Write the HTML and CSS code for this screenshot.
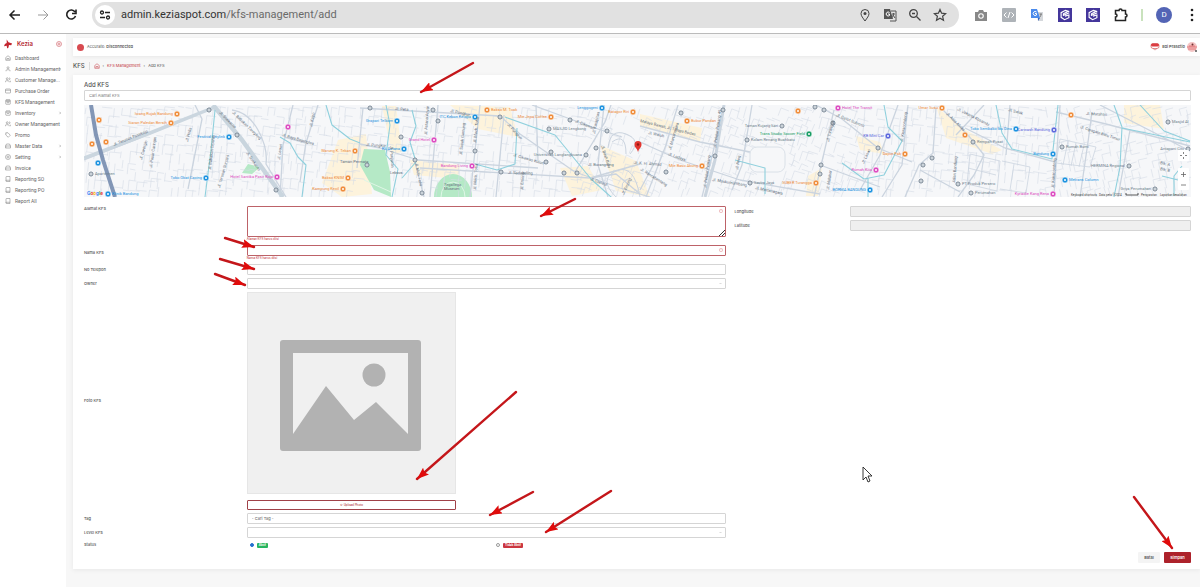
FILE: index.html
```html
<!DOCTYPE html>
<html lang="id">
<head>
<meta charset="utf-8">
<title>Add KFS</title>
<link rel="stylesheet" href="styles.css">
</head>
<body>
<svg class="sprite" aria-hidden="true">
  <symbol id="i-home" viewBox="0 0 24 24"><path d="M3 10 12 3l9 7v11H3zM8 21v-7h8v7"/></symbol>
  <symbol id="i-user" viewBox="0 0 24 24"><circle cx="12" cy="7" r="4"/><path d="M4 21v-2a4 4 0 0 1 4-4h8a4 4 0 0 1 4 4v2"/></symbol>
  <symbol id="i-users" viewBox="0 0 24 24"><circle cx="9" cy="7" r="4"/><path d="M1 21v-2a4 4 0 0 1 4-4h8a4 4 0 0 1 4 4v2M16 3a4 4 0 0 1 0 8M23 21v-2a4 4 0 0 0-3-4"/></symbol>
  <symbol id="i-card" viewBox="0 0 24 24"><rect x="2" y="4" width="20" height="16" rx="2"/><path d="M2 9h20"/></symbol>
  <symbol id="i-store" viewBox="0 0 24 24"><rect x="3" y="3" width="18" height="18" rx="2"/><path d="M3 9h18M9 9v6h6V9M4 5h16"/></symbol>
  <symbol id="i-box" viewBox="0 0 24 24"><rect x="3" y="4" width="18" height="17" rx="2"/><path d="M3 9h18M8 2v4M16 2v4M8 14h8"/></symbol>
  <symbol id="i-tag" viewBox="0 0 24 24"><path d="M3 3h9l9 10-8 8L3 12zM7 7h1"/></symbol>
  <symbol id="i-drive" viewBox="0 0 24 24"><path d="M6 4h12l4 8v8H2v-8zM2 12h20M6 16h2"/></symbol>
  <symbol id="i-gear" viewBox="0 0 24 24"><circle cx="12" cy="12" r="10"/><circle cx="12" cy="12" r="4"/></symbol>
  <symbol id="i-book" viewBox="0 0 24 24"><path d="M4 20V4a2 2 0 0 1 2-2h14v20H6a2 2 0 0 1 0-5h14"/></symbol>
  <symbol id="i-chev" viewBox="0 0 24 24"><path d="m9 5 7 7-7 7"/></symbol>
  <symbol id="i-alert" viewBox="0 0 24 24"><circle cx="12" cy="12" r="10"/><path d="M12 7v6M12 16v1"/></symbol>
  <symbol id="i-kezia" viewBox="0 0 18 18"><rect x="0" y="0" width="18" height="18" fill="#44369b"/><path d="M14.500 4.500 9.500 3 4 6v6l4.500 3 5.500-2.500V9L9 10.500M14.500 6 7 9.500V7.500L12 5" fill="none" stroke="#fff" stroke-width="1.500"/></symbol>
</svg>

<header class="browser">
  <div class="nav">
    <button class="plain" aria-label="Back"><svg class="ic16" viewBox="0 0 16 16"><path d="M13 8H3M7.500 3.500 3 8l4.500 4.500" stroke="#222" stroke-width="1.500"/></svg></button>
    <button class="plain" aria-label="Forward"><svg class="ic16" viewBox="0 0 16 16"><path d="M3 8h10M8.500 3.500 13 8l-4.500 4.500" stroke="#999"/></svg></button>
    <button class="plain" aria-label="Reload"><svg class="ic16" viewBox="0 0 16 16"><path d="M12 5A4.500 4.500 0 1 0 12.500 9M13 2.500v4H9" stroke="#222" stroke-width="1.600"/></svg></button>
  </div>
  <div class="address">
    <button class="site" aria-label="Site information"><svg class="ic12" viewBox="0 0 12 12"><g stroke="#222" stroke-width="1.300"><circle cx="3" cy="3.500" r="1.500"/><path d="M6 3.500h5M1 8.500h5"/><circle cx="9" cy="8.500" r="1.500"/></g></svg></button>
    <span class="url">admin.keziaspot.com<span class="path">/kfs-management/add</span></span>
    <div class="tools">
      <button class="plain" aria-label="Location"><svg class="ic14" viewBox="0 0 14 14"><path d="M7 13C5 10 3 8 3 5.500a4 4 0 0 1 8 0C11 8 9 10 7 13z" stroke="#444"/><circle cx="7" cy="5.500" r="1.500" fill="#444"/></svg></button>
      <button class="plain" aria-label="Translate"><svg class="ic14" viewBox="0 0 14 14"><path d="M1 1h6l3 10H1z" fill="#555"/><path d="M8 3h5v10H7M9 6h3M10.500 5c0 3-1 4-2 5M10 7l2 3" stroke="#555"/><path d="M6.500 4.500a2 2 0 1 0 0 3V6H5" stroke="#fff"/></svg></button>
      <button class="plain" aria-label="Zoom"><svg class="ic14" viewBox="0 0 14 14"><circle cx="5.500" cy="5.500" r="3.800" stroke="#444" stroke-width="1.300"/><path d="m8.500 8.500 4 4M4 5.500h3" stroke="#444" stroke-width="1.300"/></svg></button>
      <button class="plain" aria-label="Bookmark"><svg class="ic14" viewBox="0 0 14 14"><path d="m7 1.500 1.600 3.700 4 .4-3 2.700.9 4L7 10.200l-3.500 2.100.9-4-3-2.700 4-.4z" stroke="#444" stroke-width="1.200"/></svg></button>
    </div>
  </div>
  <div class="ext">
    <svg class="ic14" viewBox="0 0 14 14"><path d="M1 4h3l1-2h4l1 2h3v9H1z" fill="#888"/><circle cx="7" cy="8" r="2.800" fill="#fff"/><circle cx="7" cy="8" r="1.700" fill="#888"/></svg>
    <svg class="ic14" viewBox="0 0 14 14"><rect width="14" height="14" rx="1" fill="#aeb3b8"/><path d="M4.500 4.500 2 7l2.500 2.500M9.500 4.500 12 7 9.500 9.500M8 4 6 10" stroke="#fff"/></svg>
    <svg class="ic14" viewBox="0 0 14 14"><path d="M6 4h7v9H8z" fill="#d5d8dc"/><path d="M1 1h6l3 9H1z" fill="#4b8bec"/><path d="M8 10h2l-2 3z" fill="#2f62c0"/><path d="M6.500 4a2 2 0 1 0 0 3V5.500H5" stroke="#fff"/><path d="M9.500 6H12M11 6c0 2-1 3-1 3" stroke="#777"/></svg>
    <svg class="ic14" viewBox="0 0 18 18"><use href="#i-kezia"/></svg>
    <svg class="ic14" viewBox="0 0 18 18"><use href="#i-kezia"/></svg>
    <svg class="ic14" viewBox="0 0 14 14"><path d="M1.500 2.500h3.500a1.500 1.500 0 0 1 3 0h3.500V6a1.500 1.500 0 0 1 0 3v3.500h-10V9a1.500 1.500 0 0 0 0-3z" stroke="#222" stroke-width="1.500"/></svg>
    <span class="bar"></span>
    <span class="avatar">D</span>
    <button class="plain" aria-label="Menu"><svg class="dots" viewBox="0 0 4 14"><g fill="#222"><circle cx="2" cy="2" r="1.300"/><circle cx="2" cy="7" r="1.300"/><circle cx="2" cy="12" r="1.300"/></g></svg></button>
  </div>
</header>

<div class="app">
  <aside class="side">
    <div class="brand">
      <svg class="logo" viewBox="0 0 10 10"><path d="M3 0 5 3 9 4.500 8 6.500 5.500 6 5 9 3.500 10 3 7 0 7.500 1 5 3 4z" fill="#c22630"/></svg>
      <strong>Kezia</strong>
      <svg class="line red" viewBox="0 0 24 24"><use href="#i-gear"/></svg>
    </div>
    <nav class="menu">
      <a href="#"><svg class="line"><use href="#i-home"/></svg><span>Dashboard</span></a>
      <a href="#"><svg class="line"><use href="#i-user"/></svg><span>Admin Management</span><svg class="chev"><use href="#i-chev"/></svg></a>
      <a href="#"><svg class="line"><use href="#i-users"/></svg><span>Customer Manage...</span></a>
      <a href="#"><svg class="line"><use href="#i-card"/></svg><span>Purchase Order</span></a>
      <a href="#"><svg class="line"><use href="#i-store"/></svg><span>KFS Management</span></a>
      <a href="#"><svg class="line"><use href="#i-box"/></svg><span>Inventory</span><svg class="chev"><use href="#i-chev"/></svg></a>
      <a href="#"><svg class="line"><use href="#i-users"/></svg><span>Owner Management</span></a>
      <a href="#"><svg class="line"><use href="#i-tag"/></svg><span>Promo</span></a>
      <a href="#"><svg class="line"><use href="#i-drive"/></svg><span>Master Data</span><svg class="chev"><use href="#i-chev"/></svg></a>
      <a href="#"><svg class="line"><use href="#i-gear"/></svg><span>Setting</span><svg class="chev"><use href="#i-chev"/></svg></a>
      <a href="#"><svg class="line"><use href="#i-drive"/></svg><span>Invoice</span></a>
      <a href="#"><svg class="line"><use href="#i-book"/></svg><span>Reporting SO</span></a>
      <a href="#"><svg class="line"><use href="#i-book"/></svg><span>Reporting PO</span></a>
      <a href="#"><svg class="line"><use href="#i-book"/></svg><span>Report All</span></a>
    </nav>
  </aside>

  <main class="main">
    <div class="status-bar">
      <span class="dot"></span>
      <span>Accurate: <b>Disconnected</b></span>
      <span class="who">
        <svg class="flag" viewBox="0 0 10 9"><rect x="1" y="1" width="8" height="5" rx="2" fill="#fff" stroke="#c44" stroke-width=".6"/><rect x="1" y="1" width="8" height="3" rx="1.500" fill="#dc3d42"/><path d="M3 6q2 3 4 0" stroke="#c66" fill="none" stroke-width=".6"/></svg>
        <b>Edi Prasetio</b>
        <svg class="face" viewBox="0 0 10 10"><circle cx="5" cy="5" r="5" fill="#f4c4c4"/><path d="M0 5h10M1 7h8M2 4h6" stroke="#e0686b" stroke-width=".8"/><circle cx="5.500" cy="2.500" r="1" fill="#703030"/><circle cx="9" cy="9" r="1" fill="#555"/></svg>
      </span>
    </div>

    <div class="crumbs">
      <h1>KFS</h1>
      <a href="#" aria-label="Home"><svg class="line red"><use href="#i-home"/></svg></a>
      <span>›</span><a href="#">KFS Management</a><span>›</span><span>Add KFS</span>
    </div>

    <form class="card">
      <h2><label for="cari">Add KFS</label></h2>
      <input class="field search" id="cari" placeholder="Cari Alamat KFS">
      <svg class="map" id="map" viewBox="84 105 1107 92" preserveAspectRatio="xMidYMid slice" role="img" aria-label="Peta"></svg>

      <div class="columns">
        <div class="left">
          <div class="row top">
            <label for="alamat">Alamat KFS</label>
            <div class="holder">
              <textarea class="field bad" id="alamat"></textarea>
              <svg class="mark"><use href="#i-alert"/></svg>
              <svg class="grip" viewBox="0 0 6 6"><path d="M0 6 6 0M3 6l3-3"/></svg>
              <p class="error">Alamat KFS harus diisi</p>
            </div>
          </div>
          <div class="row">
            <label for="nama">Nama KFS</label>
            <div class="holder">
              <input class="field bad" id="nama">
              <svg class="mark"><use href="#i-alert"/></svg>
              <p class="error">Nama KFS harus diisi</p>
            </div>
          </div>
          <div class="row"><label for="telp">No Telepon</label><input class="field" id="telp"></div>
          <div class="row"><label for="owner">Owner</label><div class="holder"><select class="field" id="owner"><option></option></select><svg class="caret"><use href="#i-chev"/></svg></div></div>
          <div class="row">
            <span>Foto KFS</span>
            <div class="photo">
              <svg class="preview" viewBox="0 0 209 202" role="img" aria-label="Foto"><rect x=".5" y=".5" width="208" height="201" fill="#f0f0f0" stroke="#e6e6e6"/><path fill="#b2b2b2" fill-rule="evenodd" d="M36 48h135a3 3 0 0 1 3 3v105a3 3 0 0 1-3 3H36a3 3 0 0 1-3-3V51a3 3 0 0 1 3-3zM46 61v85h115V61z"/><circle cx="127" cy="83" r="11.500" fill="#b2b2b2"/><path fill="#b2b2b2" d="M46 142 79 94l28 34 22-18 32 32v5H46z"/></svg>
              <button type="button" class="upload">⇧ Upload Photo</button>
            </div>
          </div>
          <div class="row"><label for="tag">Tag</label><input class="field tag" id="tag" placeholder="- Cari Tag -"></div>
          <div class="row"><label for="level">Level KFS</label><div class="holder"><select class="field" id="level"><option></option></select><svg class="caret"><use href="#i-chev"/></svg></div></div>
          <div class="row">
            <span>Status</span>
            <div class="radios">
              <label><input type="radio" name="status" checked><span class="badge green">Aktif</span></label>
              <label><input type="radio" name="status"><span class="badge crimson">Tidak Aktif</span></label>
            </div>
          </div>
        </div>
        <div class="right">
          <div class="row"><label for="lon">Longitude</label><input class="field" id="lon" disabled></div>
          <div class="row"><label for="lat">Latitude</label><input class="field" id="lat" disabled></div>
        </div>
      </div>
      <div class="actions">
        <button type="button" class="btn">Batal</button>
        <button type="button" class="btn save">Simpan</button>
      </div>
    </form>
  </main>
</div>

<svg class="notes" viewBox="0 0 1200 587" aria-hidden="true">
  <defs><marker id="tip" markerUnits="userSpaceOnUse" markerWidth="13" markerHeight="9" refX="12" refY="4.500" orient="auto"><path d="M0 0 12 4.500 0 9 2 4.500z" fill="#e00b0b"/></marker></defs>
  <g stroke="#c4161a" stroke-width="2.400" stroke-linecap="round">
    <path d="M473 63 421 92" marker-end="url(#tip)"/><path d="M575 199 541 216" marker-end="url(#tip)"/>
    <path d="M225 238 254 247" marker-end="url(#tip)"/><path d="M220 259 254 269" marker-end="url(#tip)"/>
    <path d="M215 274 245 285" marker-end="url(#tip)"/><path d="M516 392 417 479" marker-end="url(#tip)"/>
    <path d="M533 492 490 515" marker-end="url(#tip)"/><path d="M611 491 546 532" marker-end="url(#tip)"/>
    <path d="M1134 497 1172 548" marker-end="url(#tip)"/>
  </g>
  <path d="M863 467v13l3-3 2 5 2-1-2-5h4z" fill="#fff" stroke="#222" stroke-width=".9"/>
</svg>
<script src="map.js"></script>
</body>
</html>
```
FILE: styles.css
```css
* { box-sizing: border-box; }
body { margin: 0; min-height: 100vh; display: flex; flex-direction: column; background: #f7f7f7; color: #555; font: 5px/8px Inter, "Liberation Sans", sans-serif; }
svg { display: block; fill: none; flex: none; }
h1, h2, p { margin: 0; }
a { color: inherit; text-decoration: none; }
button, input, select, textarea { font: inherit; color: inherit; margin: 0; }
.sprite { position: absolute; width: 0; height: 0; }

.browser { display: flex; align-items: center; gap: 15px; height: 34px; padding: 0 6px 3px 7px; background: #fff; border-bottom: 1px solid #bbb; }
.plain { border: 0; padding: 0; background: none; }
.nav { display: flex; gap: 12px; }
.ic16 { width: 16px; height: 16px; }
.ic14 { width: 14px; height: 14px; }
.ic12 { width: 12px; height: 12px; }
.dots { width: 4px; height: 14px; }
.address { flex: 1; display: flex; align-items: center; height: 26px; padding: 0 12px 0 3px; border-radius: 13px; background: #e1e1e1; }
.nav + .address { margin-left: -2px; }
.site { display: flex; align-items: center; justify-content: center; width: 20px; height: 20px; padding: 0; border: 0; border-radius: 50%; background: #fff; }
.url { margin-left: 6px; font: 11px/16px Roboto, sans-serif; color: #333; }
.path { color: #6a6a6a; }
.tools { display: flex; gap: 11px; margin-left: auto; }
.ext { display: flex; align-items: center; gap: 14px; }
.bar { width: 2px; height: 12px; margin: 0 -1px 0 -1px; background: #c9e2bd; }
.avatar { width: 16px; height: 16px; margin-right: 4px; border-radius: 50%; background: #5364b5; color: #fff; font: 8px/16px Roboto, sans-serif; text-align: center; }

.app { flex: 1; display: flex; }
.side { flex: none; width: 66px; padding: 4px; background: #fff; }
.brand { display: flex; align-items: center; gap: 3px; height: 12px; margin-bottom: 2px; color: #b3262e; font-size: 6px; }
.brand strong { flex: 1; font-weight: 600; padding-left: 1px; }
.logo { width: 9px; height: 10px; }
.line { width: 6px; height: 6px; stroke: #777; stroke-width: 2; }
.red { stroke: #c43a42; }
.menu a { display: flex; align-items: center; gap: 4px; height: 11px; padding-left: 1px; white-space: nowrap; font-family: Roboto, sans-serif; color: #666; }
.menu span { flex: 1; min-width: 0; }
.chev { width: 4px; height: 4px; margin-left: -4px; stroke: #777; stroke-width: 3; }

.main { flex: 1; min-width: 0; padding: 4px 0 18px 7px; }
.status-bar { display: flex; align-items: center; gap: 3px; height: 18px; padding: 0 3px 0 4px; background: #fff; box-shadow: 0 1px 4px #0001; font-size: 4px; }
.status-bar b { font-weight: 600; }
.dot { width: 7px; height: 7px; border-radius: 50%; background: #d84a50; }
.who { display: flex; align-items: center; gap: 2px; margin-left: auto; }
.flag, .face { width: 10px; height: 10px; }
.crumbs { display: flex; align-items: center; gap: 3px; height: 19px; font-size: 4px; }
.crumbs a { color: #c2343c; }
.crumbs h1 { margin-right: 1px; padding-right: 4px; border-right: 1px solid #ddd; font-size: 6px; font-weight: 500; color: #555; }

.card { padding: 5px 9px 6px 11px; background: #fff; box-shadow: 0 1px 5px #0001; }
.card h2 { font-size: 6px; font-weight: 500; line-height: 10px; }
.field { display: block; width: 100%; height: 11px; padding: 0 4px; border: 1px solid #d5d5d5; border-radius: 1px; background: #fff; font-size: 4px; outline: 0; appearance: none; }
.field::placeholder { color: #777; }
.field:disabled { background: #efefef; }
.bad { border-color: #bd6268; }
.map { width: 100%; height: auto; margin: 4px 0 9px; background: #f6f7f9; }
.columns { display: grid; grid-template-columns: 643fr 457fr; gap: 8px; font-size: 4px; font-weight: 500; }
.left, .right { display: flex; flex-direction: column; gap: 3px; }
.row { display: grid; grid-template-columns: 163fr 480fr; align-items: center; }
.row.top { align-items: start; }
.top > label { line-height: 6px; }
.holder { position: relative; }
textarea.field { height: 31px; resize: none; }
.error { height: 5px; color: #c9484e; font-size: 3px; line-height: 5px; }
.mark { position: absolute; top: 3px; right: 3px; width: 4px; height: 4px; stroke: #d4555b; stroke-width: 2; }
.grip { position: absolute; top: 24px; right: 1px; width: 6px; height: 6px; stroke: #333; }
.caret { position: absolute; top: 4px; right: 4px; width: 3px; height: 3px; stroke: #888; stroke-width: 3; transform: rotate(90deg); }
.photo { width: 209px; }
.preview { width: 100%; height: auto; margin-bottom: 6px; }
.upload { display: block; width: 100%; height: 10px; padding: 0; border: 1px solid #a04148; border-radius: 1px; background: #fff; color: #b3363e; font-size: 3px; line-height: 6px; }
.radios { display: grid; grid-template-columns: 248fr 232fr; padding-left: 3px; }
.radios label { display: flex; align-items: center; gap: 3px; }
.radios input { appearance: none; width: 4px; height: 4px; border: 1px solid #999; border-radius: 50%; background: #fff; }
.radios input:checked { border-color: #2470d0; background: #2470d0; }
.badge { padding: 0 2px; border-radius: 1px; color: #fff; font-size: 3px; font-weight: 700; line-height: 5px; }
.green { background: #27b560; }
.crimson { background: #cb3640; }
.actions { display: flex; justify-content: flex-end; gap: 4px; margin-top: 3px; }
.btn { width: 22px; height: 11px; padding: 0; border: 0; border-radius: 1px; background: #f4f4f4; font-size: 4px; font-weight: 600; line-height: 10px; }
.save { width: 27px; background: #ad222b; color: #fff; }

.notes { position: absolute; top: 0; left: 0; width: 1200px; height: 587px; pointer-events: none; }
```
FILE: map.js
```js
const out = [];
const add = s => out.push(s);
const line = (d, color, width) => add(`<path d="${d}" stroke="${color}" stroke-width="${width}" fill="none" stroke-linejoin="round"/>`);

// Repeatable pseudo-random numbers for the side streets.
let seed = 11;
const rnd = () => (seed = (seed * 16807) % 2147483647) / 2147483647;

// Built-up areas and parks.
[
  "M338 140l28-6 6 60-30 3-20-14zM410 160l50 5-2 14-44-4zM450 105l60 2 8 30-40-8zM560 168l28-2 14 24-30 6zM600 145l36 16 14 36-34-6z",
  "M640 114l62 14-2 14-60-16zM856 136l24 6 4 12-24-4zM808 176l14-8-4 28h-12zM936 106l26 22 40 22-10 4-46-16zM1124 105h36l4 24-40-6zM382 106h14l6 46-10 2z"
].forEach(d => add(`<path d="${d}" fill="#fdf3dc"/>`));
add('<path d="M364 149l21 1 5 22 1 25-17-7-14-25zM242 173l6-9 12 3-8 7zM434 197a19 23 0 0 1 38 0z" fill="#b5e9c6"/>');
line("M364 180l27 12M441 197a12 15 0 0 1 24 0", "#dff6e6", 1);

for (let x = 86; x < 1190; x += 7) {
  for (let y = 106; y < 196; y += 9) {
    const blank = (x > 752 && x < 784 && y > 142 && y < 172) || (x > 358 && x < 390 && y > 146);
    if (blank) continue;
    const lean = x > 580 && x < 860 ? 3 : x > 1040 ? -2 : 1;
    const jx = rnd() * 3, jy = rnd() * 4;
    if (rnd() < 0.6) line(`M${x + jx} ${y + jy}l${-lean} ${6 + rnd() * 6}`, "#d5dce5", 0.6);
    if (rnd() < 0.55) line(`M${x + jx} ${y + jy}l${5 + rnd() * 6} ${lean}`, "#d5dce5", 0.6);
  }
}
add('<rect x="750" y="147" width="35" height="25" rx="7" fill="#f6f7f9" stroke="#d3dae3" stroke-width=".8"/>');
line("M970 154l30 7-3 30-30-7zM984 157l-5 30M968 168l28 7M1002 161l28 6-4 26-26-4M1014 164l-4 26M1060 139l36 8-6 20-34-4zM1068 141l-5 24M1076 143l-5 23M1084 145l-5 22", "#cbd4df", 0.8);
line("M608 148q2-20 18-14t4 20M612 142q14-10 14 12M616 197q-18-18 0-26t24 26M624 192q-6-10 6-14", "#cbd4df", 1);

// Secondary roads.
[
  "M84 160 135 140 215 107", "M195 105l7 14-14 70", "M232 110q16 2 26 20t8 34l20 33", "M293 105l-10 40-3 52", "M318 105l-12 38-22-6M306 142l-6 40",
  "M360 108 430 112 500 116 520 134 575 172 620 188 650 197", "M363 108l-6 60", "M360 144l20 4 38 12 120 8", "M438 105l-8 92M480 105l-10 92M504 115l-8 82M536 105l2 56",
  "M414 158l10 39M420 168l170 10 50-14", "M532 105l60 22 30 10M575 172l30-50 6-17M604 105l-6 60 10 32", "M590 178l26-4 24 20",
  "M640 126l60 16 50 10M724 105l-14 60-8 32M678 105l-12 40-20 52M640 142l40 18 60 20 80 14M752 105l-10 60-10 25M640 190l16-30",
  "M816 105l26 14 36 29 34 14M834 110l-14 60-6 27M898 105l-18 50-20 35M908 105l-6 60-20 32M820 165l60 22",
  "M936 108l-3 45-14 12-14 32M940 107l28 28 16 20-10 20-16 22M984 105l-28 30M965 128l40 20 50 14M920 170l40 22",
  "M1056 112l50 12 84 22M1060 105l-6 90M1092 112l-4 30-8 55M1130 130l-12 67M1100 105l90 46M1010 105l-4 50"
].forEach(d => line(d, "#cbd4df", 1.3));

// Trunk roads.
line("M84 158 150 133 215 107", "#cbd6df", 3.5);
line("M213 105 242 140 283 197", "#c9d5de", 4.5);
line("M724 105 715 160 705 197", "#cbd5df", 3);
line("M91 105 96 135 103 160 115 197", "#8296b6", 4);

// Waterways.
[
  "M215 110l-4 40-6 47", "M280 137l10 6 8 14 8 8-4 32M326 105l6 20 18 14 10 4", "M386 105l4 20-4 30 12 14-6 28M412 110l4 16-6 16 6 20-14 16",
  "M505 117l50 18 36 44 20 18M517 128l-2 36-18 6-22-6", "M735 160l30 8 0 26", "M884 105l4 22 14 14-18 34-20 4-22-16M868 178v19",
  "M996 105l6 28 10 16 40 10 6-54", "M1114 105l8 22-2 40-6 30M1140 105l24 26 26 10M1122 128l68 14M1182 166l-8 10v20M1162 176l16 4"
].forEach(d => line(d, "#8fd0dd", 1.1));

const C = { o: "#ef8b38", b: "#1991df", p: "#dc49c0", g: "#71808f", v: "#5a66dc", n: "#159b62" };
const pin = (x, y, c) => add(`<circle cx="${x}" cy="${y}" r="${c === "g" ? 2 : 2.9}" fill="${c === "g" ? "#fff" : C[c]}" stroke="${c === "g" ? C.g : "#fff"}" stroke-width="${c === "g" ? 1 : 0.5}"/><circle cx="${x}" cy="${y}" r="1" fill="${c === "g" ? "#b9c3cc" : "#fff"}"/>`);
const text = (x, y, s, color, anchor, turn) => add(`<text x="${x}" y="${y}" fill="${color}" text-anchor="${anchor}" transform="rotate(${turn || 0} ${x} ${y})">${s}</text>`);

// Places: x, y, colour, label, side of the pin the label is on.
[
  [177, 114, "o", "Iwang Rujak Bandung", "l"], [171, 123, "o", "Siaran Paledan Bersih", "l"], [99, 120, "o"], [92, 144, "o"], [106, 142, "o"],
  [98, 163, "b"], [91, 174, "g", "Apartemen", "r"], [108, 194, "b", "Klinik Bandung", "r"], [229, 137, "b", "Festival Citylink", "l"],
  [206, 178, "b", "Toko Obat Cacing", "l"], [277, 177, "p", "Hotel Santika Pasir Koja", "l"], [288, 127, "p"], [355, 151, "o", "Warung K. Tekan", "l"],
  [348, 178, "o", "Bakso KNIM", "l"], [343, 189, "o", "Kampung Kecil", "l"], [397, 121, "b", "Grapari Telkom", "l"], [475, 117, "b", "ITC Kebon Kelapa", "l"],
  [434, 140, "p", "Grand Hotel", "l"], [404, 149, "b", "RS Astana", "l"], [472, 166, "p", "Bandung Living", "l"], [487, 110, "o", "Bakso M. Toak", "r"],
  [551, 117, "o", "Mie Jepa Coffee", "l"], [602, 108, "b", "Lenggogeni", "l"], [633, 112, "o", "Batagor Riri", "l"], [549, 129, "g", "MASJID Lengkong", "r"],
  [586, 155, "g", "Universitas Langlangbuana", "l"], [687, 121, "o", "Bubur Pandan", "r"], [702, 166, "o", "Mie Baso Akung", "l"], [798, 111, "o"], [782, 126, "g", "Taman Kujang Sari", "l"],
  [809, 134, "n", "Trans Studio Soccer Field", "l"], [747, 140, "g", "Kolam Renang Buahbatu", "r"], [838, 108, "p", "Hotel The Transit", "r"], [888, 136, "v", "KB Mini Car", "l"],
  [905, 154, "o", "Dapur Pak", "l"], [876, 170, "p", "Rumah Kita", "l"], [750, 183, "g", "Savira Jaya", "r"], [816, 183, "o", "SUBER Turangga", "l"],
  [870, 190, "b", "BORMA BANDUNG", "l"], [942, 108, "o", "Umar Susu", "l"], [965, 135, "o"], [1071, 115, "o"], [1016, 129, "b", "Toko Sembako Ibu Dina", "l"],
  [1054, 130, "v", "Carwash Bandung", "l"], [973, 142, "g", "Rempah Pusat", "r"], [1053, 154, "b", "Bandung", "l"], [1062, 147, "g", "Rumah Bumi", "r"], [1065, 180, "b", "Metrans Column", "r"],
  [958, 184, "g", "PT Produk Persero", "r"], [971, 193, "g", "Perumahan", "r"], [1053, 194, "p", "Kyriadie Kang Rena", "l"], [1129, 166, "g", "HERMINA Regional", "l"],
  [1155, 189, "g", "Griya Perumahan", "l"], [1168, 122, "g", "Masjid Al", "r"], [1188, 149, "g", "Antapani City", "l"]
].forEach(([x, y, c, s, side]) => {
  if (s) text(side === "l" ? x - 4 : x + 4, y + 1.4, s, c === "g" ? "#6e7f8c" : C[c], side === "l" ? "end" : "start");
  pin(x, y, c);
});
[[209, 110], [237, 135], [276, 190], [370, 108], [401, 137], [367, 165], [415, 160], [422, 193], [433, 110], [438, 121], [475, 151], [500, 117], [501, 172],
 [551, 152], [546, 162], [564, 173], [577, 173], [570, 120], [596, 148], [607, 131], [681, 113], [723, 110], [715, 156], [666, 172], [815, 107], [824, 110],
 [833, 123], [821, 165], [820, 174], [878, 148], [932, 158], [923, 165], [921, 181]].forEach(([x, y]) => pin(x, y, "g"));

// Street names: x, y, name, angle.
[
  [114, 146, "Jl. Terusan Pasirkoja", -22], [219, 113, "Jl. Soekarno", 45], [246, 153, "Jl. Soekarno", 55], [211, 170, "Jl. Babakan Ciparay", -84],
  [142, 160, "Jl. Caringin", -74], [152, 168, "Jl. Pasar Caringin", -82], [188, 142, "Jl. Holis", -75], [220, 188, "Jl. Terusan Suryani", -74],
  [232, 113, "Jl. Babakan Tarogong", 44], [282, 136, "Jl. Raya Bojongloa", 16], [312, 127, "Jl. Kopo", -78], [280, 160, "Jl. Leuwi", -82],
  [366, 146, "Jl. Pungkur", 3], [395, 110, "Jl. Peta", 4], [450, 112, "Jl. Pungkur", 12], [427, 135, "Jl. Astana Anyar", -86], [390, 146, "Jl. Panjunan", 86],
  [415, 163, "Jl. Moh. Toha", 78], [476, 143, "Jl. Moch. Toha", -84], [476, 190, "Jl. Moch. Toha", -86], [462, 155, "Jl. Sasak Gantung", -84], [507, 125, "Jl. Pungkur", 47],
  [508, 174, "Jl. Sadakeling", 1], [523, 190, "Jl. Emong", -86], [513, 156, "Jl. Cikawao Kulon", 16], [575, 122, "Jl. Cikawao", 22], [595, 134, "Jl. Karapitan", -78],
  [601, 146, "Jl. Buah Batu", 72], [588, 166, "Jl. Burangrang", 0], [590, 180, "Jl. Ciateul", 20], [624, 195, "Jl. Emong", -65], [634, 164, "Jl. K. H. Ahmad", 4],
  [640, 122, "Malaya Bawah, Jl. Talaga Bodas", 14], [648, 134, "Jl. Waluh", 12], [668, 155, "Jl. Lodaya", 20], [640, 170, "Jl. Rancabentang", 32], [671, 150, "Jl. Martanegara", -74],
  [716, 148, "Jl. Pelajar Pejuang 45", -82], [706, 188, "Jl. Pelajar Pejuang", -82], [738, 170, "Jl. Reog", -80], [712, 181, "Jl. Maskumambang", 9], [755, 189, "Jl. Martanegara", 12],
  [836, 116, "Jl. Gatot Subroto", 22], [829, 142, "Jl. Turangga", -76], [864, 164, "Jl. Laswi", -65], [903, 142, "Jl. Kiaracondong", -82], [829, 190, "Jl. Malabar", -82],
  [946, 114, "Jl. Asia Afrika", 45], [957, 110, "Jl. Jakarta Kosambi", 27], [955, 183, "Jalan Bandung", -85], [1086, 115, "Jl. Matahari", 2], [1080, 128, "Jl. Cipagalo Baru Timur", 18],
  [1054, 188, "Jl. Kiaracondong", -86], [1008, 111, "Jl. Salak", 14], [1160, 164, "Blk. A", 12], [1160, 170, "Blk. B", 12], [340, 163, "Taman Permata", 0],
  [444, 186, "Tegallega", 0], [444, 190, "Museum", 0], [390, 174, "Leksus", 0]
].forEach(([x, y, s, a]) => text(x, y, s, "#65717d", "start", a));

// Selected location.
add('<path d="M638 152c-1-4-3.500-4.500-3.500-7.500a3.500 3.500 0 0 1 7 0c0 3-2.500 3.500-3.500 7.500z" fill="#e2352f"/><circle cx="638" cy="144.500" r="1.200" fill="#8e1814"/>');

// Map controls and attribution.
add('<rect x="1178" y="150" width="11" height="11" rx="1" fill="#fff"/><rect x="1178" y="168" width="11" height="22" rx="1" fill="#fff"/>');
line("M1183.500 152v2M1183.500 157v2M1180 155.500h2M1185 155.500h2M1183.500 172v5M1181 174.500h5M1181 185h5", "#666", 0.8);
add('<g font-size="3" fill="#444"><text x="1071" y="196">Keyboard shortcuts</text><text x="1099" y="196">Data peta ©2024</text><text x="1141" y="196">Persyaratan</text><text x="1160" y="196">Laporkan kesalahan</text></g>');
line("M1126 193v2h12v-2", "#333", 0.8);
add('<text x="87" y="195" font-size="5" font-weight="700"><tspan fill="#4285f4">G</tspan><tspan fill="#ea4335">o</tspan><tspan fill="#fbbc05">o</tspan><tspan fill="#4285f4">g</tspan><tspan fill="#34a853">l</tspan><tspan fill="#ea4335">e</tspan></text>');

document.getElementById("map").innerHTML = `<g font-family="Roboto, sans-serif" font-size="4">${out.join("")}</g>`;
```
